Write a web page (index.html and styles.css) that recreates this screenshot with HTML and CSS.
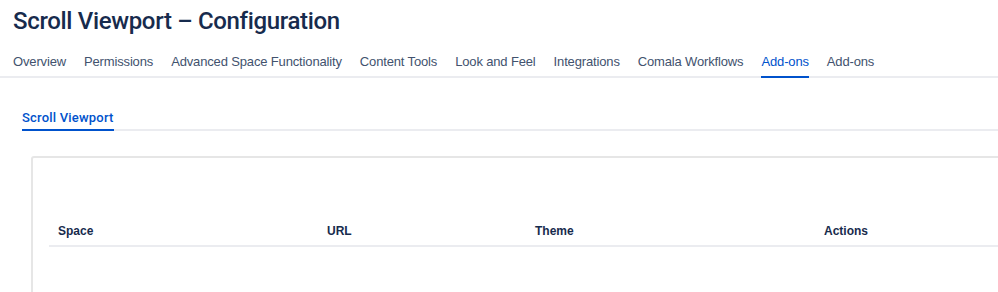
FILE: index.html
```html
<!DOCTYPE html>
<html lang="en">
<head>
<meta charset="utf-8">
<title>Scroll Viewport – Configuration</title>
<link rel="stylesheet" href="styles.css">
</head>
<body>
<div class="page">
  <h1 class="title">Scroll Viewport – Configuration</h1>
  <nav class="tabs">
    <a class="tab">Overview</a>
    <a class="tab">Permissions</a>
    <a class="tab">Advanced Space Functionality</a>
    <a class="tab">Content Tools</a>
    <a class="tab">Look and Feel</a>
    <a class="tab">Integrations</a>
    <a class="tab">Comala Workflows</a>
    <a class="tab active">Add-ons</a>
    <a class="tab">Add-ons</a>
  </nav>
  <div class="subtabs">
    <a class="subtab active">Scroll Viewport</a>
  </div>
  <section class="card">
    <div class="table">
      <div class="th">Space</div>
      <div class="th">URL</div>
      <div class="th">Theme</div>
      <div class="th">Actions</div>
    </div>
  </section>
</div>
</body>
</html>
```

FILE: styles.css
```css
html, body {
  margin: 0;
  padding: 0;
  background: #ffffff;
  overflow: hidden;
}

.page {
  font-family: "Liberation Sans", Arial, sans-serif;
  color: #172b4d;
  height: 292px;
  overflow: hidden;
}

.title {
  margin: 7px 0 0 13px;
  font-family: Roboto, "Liberation Sans", Arial, sans-serif;
  font-size: 24px;
  line-height: 28px;
  font-weight: 500;
  color: #172b4d;
  letter-spacing: -0.33px;
}

.tabs {
  display: flex;
  gap: 18px;
  margin-top: 19px;
  padding-left: 13px;
  border-bottom: 2px solid #ebecf0;
}

.tab {
  font-size: 13px;
  line-height: 16px;
  letter-spacing: -0.15px;
  color: #42526e;
  padding-bottom: 6px;
  border-bottom: 2px solid transparent;
  margin-bottom: -2px;
  white-space: nowrap;
}

.tab.active {
  color: #0052cc;
  border-bottom-color: #0052cc;
}

.subtabs {
  display: flex;
  margin: 32px 0 0 22px;
  border-bottom: 2px solid #ebecf0;
}

.subtab {
  font-family: Roboto, "Liberation Sans", Arial, sans-serif;
  font-size: 13px;
  line-height: 16px;
  font-weight: 500;
  letter-spacing: 0.2px;
  color: #0052cc;
  padding-bottom: 3px;
  border-bottom: 2px solid #0052cc;
  margin-bottom: -2px;
}

.card {
  margin: 25px -40px 0 31px;
  border: 2px solid #e6e6e6;
  border-radius: 3px;
  padding: 66px 0 60px 16px;
}

.table {
  display: grid;
  grid-template-columns: 269px 208px 289px 1fr;
  border-bottom: 2px solid #ebecf0;
}

.th {
  font-size: 12px;
  line-height: 15px;
  font-weight: 700;
  color: #172b4d;
  padding: 0 0 6px 9px;
}
```
